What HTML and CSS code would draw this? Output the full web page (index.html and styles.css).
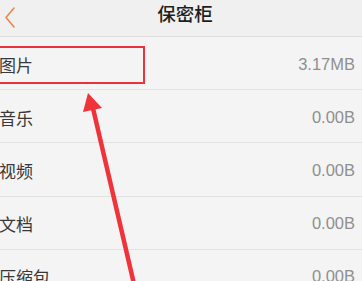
FILE: index.html
```html
<!DOCTYPE html>
<html lang="zh-CN">
<head>
    <meta charset="UTF-8">
    <title>保密柜</title>
    <link rel="stylesheet" href="styles.css">
</head>
<body>
    <div class="screen">
        <div class="top-bar">
            <svg class="back" width="14" height="22" viewBox="0 0 14 22">
                <polyline points="12,2 4,11.5 12,21" fill="none" stroke="#e8874c" stroke-width="1.6" stroke-linecap="round" stroke-linejoin="round"/>
            </svg>
            <h1 class="title">保密柜</h1>
        </div>

        <ul class="file-list">
            <li class="row"><span class="name">图片</span><span class="size">3.17MB</span></li>
            <li class="row"><span class="name">音乐</span><span class="size">0.00B</span></li>
            <li class="row"><span class="name">视频</span><span class="size">0.00B</span></li>
            <li class="row"><span class="name">文档</span><span class="size">0.00B</span></li>
            <li class="row"><span class="name">压缩包</span><span class="size">0.00B</span></li>
        </ul>

        <!-- annotation drawn over the screenshot -->
        <svg class="markup" width="362" height="281" viewBox="0 0 362 281">
            <rect x="-4" y="47" width="148" height="36" fill="none" stroke="#e9343c" stroke-width="2"/>
            <line x1="92" y1="104" x2="134" y2="284" stroke="#f0333a" stroke-width="4.5"/>
            <polygon points="88,93 83,112 102,108" fill="#f0333a"/>
        </svg>
    </div>
</body>
</html>
```

FILE: styles.css
```css
* {
    margin: 0;
    padding: 0;
    box-sizing: border-box;
}

body {
    width: 362px;
    height: 281px;
    overflow: hidden;
    background: #f4f4f4;
    font-family: "Noto Sans CJK SC", "Liberation Sans", sans-serif;
}

.screen {
    position: relative;
    width: 362px;
    height: 281px;
    overflow: hidden;
}

.top-bar {
    height: 37px;
    display: flex;
    align-items: center;
    background: #f0f0f0;
    border-bottom: 1px solid #dedede;
    position: relative;
}

.back {
    margin-left: 2px;
    margin-top: -3px;
}

.title {
    position: absolute;
    left: 0;
    right: 0;
    top: 1px;
    text-align: center;
    padding-left: 8px;
    font-size: 18.5px;
    font-weight: 500;
    color: #1e1e1e;
    line-height: 24px;
}

.file-list {
    list-style: none;
}

.row {
    height: 53.2px;
    display: flex;
    justify-content: space-between;
    align-items: center;
    border-bottom: 1px solid #e2e2e2;
    padding-right: 7px;
    padding-top: 2px;
}

.name {
    margin-left: -1px;
    font-size: 17px;
    color: #383838;
}

.size {
    font-family: "Liberation Sans", sans-serif;
    font-size: 16.5px;
    color: #8f8f8f;
}

.markup {
    position: absolute;
    left: 0;
    top: 0;
}
```
